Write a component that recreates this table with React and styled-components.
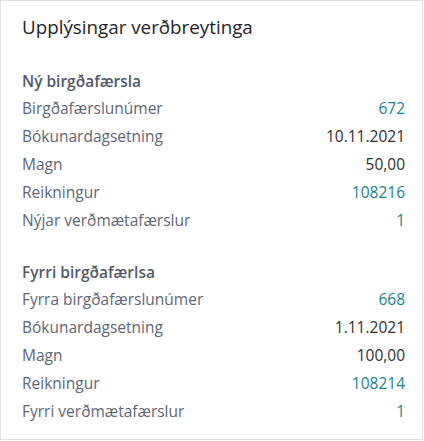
import React from "react";
import styled, { createGlobalStyle } from "styled-components";

const GlobalStyle = createGlobalStyle`
  html, body {
    margin: 0;
    padding: 0;
    background: #ffffff;
  }
  body {
    font-family: "Open Sans", "Noto Sans", Arial, sans-serif;
  }
`;

const Card = styled.div`
  box-sizing: border-box;
  width: 423px;
  height: 440px;
  border: 1px solid #e1e1e1;
  padding: 14px 17px 0 21px;
  background: #fff;
`;

const Title = styled.h2`
  margin: 0;
  font-size: 18.8px;
  font-weight: 400;
  line-height: 24px;
  color: #242424;
`;

const Section = styled.section`
  margin-top: ${(p) => p.gap}px;
`;

const Heading = styled.h3`
  margin: 0 0 2px;
  font-size: 15.5px;
  font-weight: 600;
  line-height: 22px;
  color: #525b6a;
`;

const Row = styled.div`
  display: flex;
  justify-content: space-between;
  align-items: center;
  height: 28px;
  font-size: 15.5px;
`;

const Label = styled.span`
  color: #606774;
`;

const Value = styled.span`
  color: ${(p) => (p.link ? "#16878b" : "#303030")};
`;

const sections = [
  {
    title: "Ný birgðafærsla",
    gap: 31,
    rows: [
      ["Birgðafærslunúmer", "672", true],
      ["Bókunardagsetning", "10.11.2021", false],
      ["Magn", "50,00", false],
      ["Reikningur", "108216", true],
      ["Nýjar verðmætafærslur", "1", true],
    ],
  },
  {
    title: "Fyrri birgðafærlsa",
    gap: 27,
    rows: [
      ["Fyrra birgðafærslunúmer", "668", true],
      ["Bókunardagsetning", "1.11.2021", false],
      ["Magn", "100,00", false],
      ["Reikningur", "108214", true],
      ["Fyrri verðmætafærslur", "1", true],
    ],
  },
];

export default function App() {
  return (
    <>
      <GlobalStyle />
      <Card>
        <Title>Upplýsingar verðbreytinga</Title>
        {sections.map((s) => (
          <Section key={s.title} gap={s.gap}>
            <Heading>{s.title}</Heading>
            {s.rows.map(([label, value, link]) => (
              <Row key={label}>
                <Label>{label}</Label>
                <Value link={link}>{value}</Value>
              </Row>
            ))}
          </Section>
        ))}
      </Card>
    </>
  );
}
